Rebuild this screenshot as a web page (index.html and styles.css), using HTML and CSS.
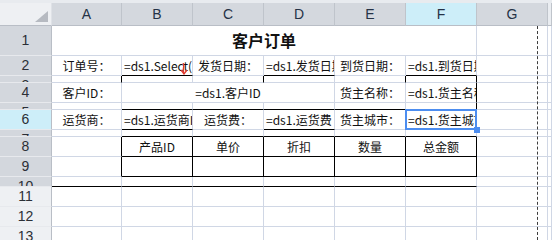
FILE: index.html
```html
<!DOCTYPE html>
<html lang="zh-CN">
<head>
    <meta charset="UTF-8">
    <title>客户订单</title>
    <link rel="stylesheet" href="styles.css">
</head>
<body>
    <div class="sheet">
        <!-- column headers -->
        <div class="row head">
            <div class="corner"><span class="tri"></span></div>
            <div class="col">A</div>
            <div class="col">B</div>
            <div class="col">C</div>
            <div class="col">D</div>
            <div class="col">E</div>
            <div class="col cur">F</div>
            <div class="col">G</div>
            <div class="col out"></div>
        </div>

        <div class="row r-title">
            <div class="num">1</div>
            <div class="c title span6">客户订单</div>
            <div class="c"></div>
            <div class="c"></div>
        </div>

        <div class="row r-20">
            <div class="num">2</div>
            <div class="c mid">订单号<span class="colon">：</span></div>
            <div class="c bb note">=ds1.Select(<svg class="mark" width="8" height="12" viewBox="0 0 8 12"><path d="M3 0 C5 3 2 6 4 10" fill="none" stroke="#e0382c" stroke-width="1.3"/><path d="M1 7 L4 11 L7 7" fill="none" stroke="#e0382c" stroke-width="1.3"/></svg></div>
            <div class="c mid">发货日期<span class="colon">：</span></div>
            <div class="c bb">=ds1.发货日期</div>
            <div class="c mid">到货日期<span class="colon">：</span></div>
            <div class="c bb">=ds1.到货日期</div>
            <div class="c"></div>
            <div class="c"></div>
        </div>

        <div class="row r-7">
            <div class="num">3</div>
            <div class="c br"></div>
            <div class="c"></div>
            <div class="c br"></div>
            <div class="c"></div>
            <div class="c br"></div>
            <div class="c br"></div>
            <div class="c"></div>
            <div class="c"></div>
        </div>

        <div class="row r-20">
            <div class="num">4</div>
            <div class="c mid">客户ID<span class="colon">：</span></div>
            <div class="c mid span3">=ds1.客户ID</div>
            <div class="c mid">货主名称<span class="colon">：</span></div>
            <div class="c br">=ds1.货主名称</div>
            <div class="c"></div>
            <div class="c"></div>
        </div>

        <div class="row r-7">
            <div class="num">5</div>
            <div class="c"></div>
            <div class="c bb"></div>
            <div class="c bb"></div>
            <div class="c bb"></div>
            <div class="c bb"></div>
            <div class="c bb br"></div>
            <div class="c"></div>
            <div class="c"></div>
        </div>

        <div class="row r-20">
            <div class="num cur">6</div>
            <div class="c mid">运货商<span class="colon">：</span></div>
            <div class="c bb">=ds1.运货商ID</div>
            <div class="c mid">运货费<span class="colon">：</span></div>
            <div class="c bb">=ds1.运货费</div>
            <div class="c mid">货主城市<span class="colon">：</span></div>
            <div class="c sel"><span class="clip">=ds1.货主城市</span></div>
            <div class="c"></div>
            <div class="c"></div>
        </div>

        <div class="row r-7">
            <div class="num">7</div>
            <div class="c"></div>
            <div class="c bb"></div>
            <div class="c bb"></div>
            <div class="c bb"></div>
            <div class="c bb"></div>
            <div class="c bb"></div>
            <div class="c"></div>
            <div class="c"></div>
        </div>

        <div class="row r-20">
            <div class="num">8</div>
            <div class="c br"></div>
            <div class="c mid br bb">产品ID</div>
            <div class="c mid br bb">单价</div>
            <div class="c mid br bb">折扣</div>
            <div class="c mid br bb">数量</div>
            <div class="c mid br bb">总金额</div>
            <div class="c"></div>
            <div class="c"></div>
        </div>

        <div class="row r-20">
            <div class="num">9</div>
            <div class="c br"></div>
            <div class="c br bb"></div>
            <div class="c br bb"></div>
            <div class="c br bb"></div>
            <div class="c br bb"></div>
            <div class="c br bb"></div>
            <div class="c"></div>
            <div class="c"></div>
        </div>

        <div class="row r-10">
            <div class="num">10</div>
            <div class="c bb"></div>
            <div class="c bb"></div>
            <div class="c bb"></div>
            <div class="c bb"></div>
            <div class="c bb"></div>
            <div class="c bb"></div>
            <div class="c"></div>
            <div class="c"></div>
        </div>

        <div class="row r-20">
            <div class="num free">11</div>
            <div class="c"></div><div class="c"></div><div class="c"></div><div class="c"></div>
            <div class="c"></div><div class="c"></div><div class="c"></div><div class="c"></div>
        </div>

        <div class="row r-20">
            <div class="num free">12</div>
            <div class="c"></div><div class="c"></div><div class="c"></div><div class="c"></div>
            <div class="c"></div><div class="c"></div><div class="c"></div><div class="c"></div>
        </div>

        <div class="row r-20">
            <div class="num free">13</div>
            <div class="c"></div><div class="c"></div><div class="c"></div><div class="c"></div>
            <div class="c"></div><div class="c"></div><div class="c"></div><div class="c"></div>
        </div>

        <!-- page break marker -->
        <div class="page-break"></div>
    </div>
</body>
</html>
```

FILE: styles.css
```css
body {
    margin: 0;
    padding: 0;
    background-color: #ffffff;
    overflow: hidden;
}

.sheet {
    position: relative;
    height: 240px;
    padding-top: 3px;
    box-sizing: border-box;
    background-color: #e8ebef;
    overflow: hidden;
}

.row {
    display: grid;
    grid-template-columns: 52px 70px 71px 71px 71px 71px 71px 71px 1fr;
    background-color: #fff;
}

.row > div {
    box-sizing: border-box;
    overflow: hidden;
    white-space: nowrap;
}

.head { height: 23px; background-color: #e8ebef; }
.r-title { height: 30px; }
.r-20 { height: 20px; }
.r-10 { height: 10px; }
.r-7 { height: 7px; }

/* header cells */
.corner {
    position: relative;
    background-color: #eef0f3;
    border-right: 1px solid #dfe2e7;
    border-bottom: 1px solid #b9bec6;
}

.tri {
    position: absolute;
    right: 3px;
    bottom: 3px;
    width: 0;
    height: 0;
    border-left: 13px solid transparent;
    border-bottom: 11px solid #b6bac1;
}

.col {
    background-color: #d4d8de;
    border-right: 1px solid #bfc4cb;
    border-bottom: 1px solid #b9bec6;
    font-family: "Liberation Sans", Arial, sans-serif;
    font-size: 14px;
    line-height: 22px;
    text-align: center;
    color: #253246;
}

.col.cur { background-color: #cdeef9; }
.col.out { background-color: #eaedf1; }

.num {
    background-color: #d3d7dd;
    border-right: 1px solid #b9bec6;
    border-bottom: 1px solid #e7e9ed;
    font-family: "Liberation Sans", Arial, sans-serif;
    font-size: 14px;
    line-height: 19px;
    text-align: center;
    color: #2b2f36;
}

.r-title .num { line-height: 29px; }
.r-7 .num, .r-10 .num { line-height: 18px; }
.num.cur { background-color: #cdeef9; }
.num.free { background-color: #eef0f3; }

/* body cells */
.c {
    border-right: 1px solid #d0d7e5;
    border-bottom: 1px solid #d0d7e5;
    font-family: "Noto Sans CJK SC", "Liberation Sans", sans-serif;
    font-size: 12px;
    line-height: 19px;
    color: #111;
    padding-left: 2px;
}

/* full-width colon sits centred in its box, as in the designer */
.colon { font-family: "Noto Sans CJK JP", "Noto Sans CJK SC", sans-serif; }

.mid { text-align: center; padding-left: 0; }
.span6 { grid-column: span 6; }
.span3 { grid-column: span 3; }

.title {
    font-size: 16px;
    font-weight: bold;
    line-height: 29px;
    text-align: center;
    padding-left: 0;
}

.bb { border-bottom-color: #000; }
.br { border-right-color: #000; }

.note { position: relative; }

.mark {
    position: absolute;
    right: 4px;
    top: 7px;
}

.row > .sel {
    position: relative;
    overflow: visible;
    padding-left: 0;
}

.clip {
    display: block;
    overflow: hidden;
    padding-left: 2px;
}

.sel::after {
    content: "";
    position: absolute;
    left: -1px;
    top: -1px;
    right: -1px;
    bottom: -1px;
    border: 2px solid #4c8df0;
}

.sel::before {
    content: "";
    position: absolute;
    right: -4px;
    bottom: -4px;
    width: 6px;
    height: 6px;
    background-color: #4c8df0;
    z-index: 2;
}

.page-break {
    position: absolute;
    left: 537px;
    top: 26px;
    bottom: 0;
    border-left: 1px dashed #3c3c3c;
}
```
